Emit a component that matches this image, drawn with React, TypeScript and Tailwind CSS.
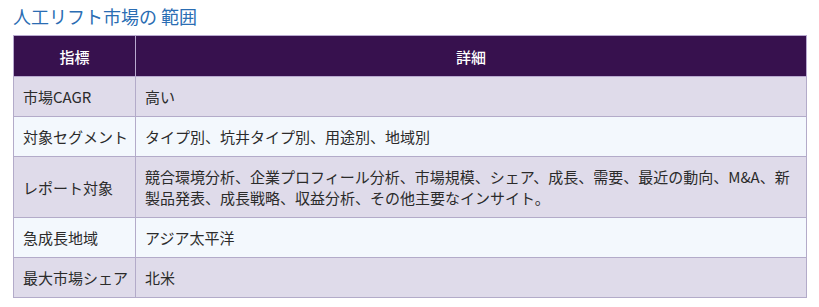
const rows: [string, string][] = [
  ['市場CAGR', '高い'],
  ['対象セグメント', 'タイプ別、坑井タイプ別、用途別、地域別'],
  [
    'レポート対象',
    '競合環境分析、企業プロフィール分析、市場規模、シェア、成長、需要、最近の動向、M&A、新製品発表、成長戦略、収益分析、その他主要なインサイト。',
  ],
  ['急成長地域', 'アジア太平洋'],
  ['最大市場シェア', '北米'],
]

export default function App() {
  return (
    <div
      className="w-[819px] h-[307px] bg-white pl-[13px] pt-[4px]"
      style={{ fontFamily: '"Noto Sans CJK JP", "Noto Sans", sans-serif' }}
    >
      {/* title */}
      <h2 className="text-[18px] leading-[24px] text-[#2a6db3] mb-[7px]">
        人工リフト市場の 範囲
      </h2>

      <table className="w-[794px] table-fixed border-collapse text-[15px] leading-[21px] text-[#2b2b2b]">
        <colgroup>
          <col className="w-[122px]" />
          <col />
        </colgroup>
        <thead>
          <tr className="bg-[#37114e] text-white h-[41px]">
            <th className="border border-[#b8a9cf] font-medium text-center">指標</th>
            <th className="border border-[#b8a9cf] font-medium text-center">詳細</th>
          </tr>
        </thead>
        <tbody>
          {rows.map(([k, v], i) => (
            <tr key={k} className={i % 2 === 0 ? 'bg-[#dfdbea]' : 'bg-[#f3f8fd]'}>
              <td className="border border-[#b3abc9] pl-[9px] pr-[4px] py-[9px] align-middle whitespace-nowrap">
                {k}
              </td>
              <td className="border border-[#b3abc9] px-[9px] py-[9px] align-middle">{v}</td>
            </tr>
          ))}
        </tbody>
      </table>
    </div>
  )
}
